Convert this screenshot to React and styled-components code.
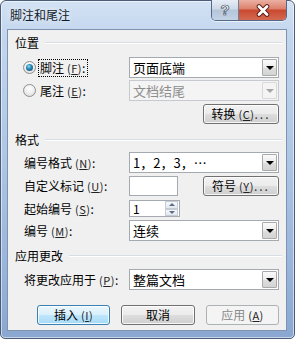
import React from "react";
import styled, { createGlobalStyle } from "styled-components";

const GlobalStyle = createGlobalStyle`
  html, body {
    margin: 0;
    padding: 0;
    background: #ffffff;
  }
  body {
    font-family: "Noto Sans CJK SC", "Liberation Sans", sans-serif;
    font-size: 12px;
    color: #000;
  }
`;

const Window = styled.div`
  box-sizing: border-box;
  width: 295px;
  height: 339px;
  display: flex;
  flex-direction: column;
  border: 1px solid #4a5c78;
  border-radius: 6px 6px 5px 5px;
  padding: 0 7px 7px 6px;
  background: linear-gradient(
    180deg,
    #d3e2f3 0%,
    #c2d6ee 10%,
    #aec7e5 45%,
    #98b4da 80%,
    #89a7d0 100%
  );
  box-shadow: inset 0 0 0 1px rgba(255, 255, 255, 0.55);
`;

const TitleBar = styled.div`
  height: 28px;
  display: flex;
  align-items: center;
  justify-content: space-between;
`;

const Title = styled.div`
  padding-left: 3px;
  font-size: 12px;
  line-height: 14px;
  color: #101a28;
  text-shadow: 0 0 6px rgba(255, 255, 255, 0.9);
`;

const CaptionButtons = styled.div`
  align-self: flex-start;
  margin-top: -1px;
  display: flex;
  height: 20px;
  border: 1px solid #55688a;
  border-top: none;
  border-radius: 0 0 5px 5px;
  overflow: hidden;
  box-shadow: 0 1px 0 rgba(255, 255, 255, 0.6);
`;

const HelpButton = styled.div`
  width: 26px;
  display: flex;
  align-items: center;
  justify-content: center;
  border-right: 1px solid #6d7e99;
  background: linear-gradient(180deg, #e6edf6 0%, #cdd9e8 45%, #b5c5da 50%, #c3d2e4 100%);
  color: #fff;
  font-family: "Liberation Sans", sans-serif;
  font-weight: bold;
  font-size: 15px;
  line-height: 16px;
  -webkit-text-stroke: 0.7px #3b4a60;
`;

const CloseButton = styled.div`
  width: 47px;
  display: flex;
  align-items: center;
  justify-content: center;
  background: linear-gradient(180deg, #eab1a4 0%, #dc7f6b 45%, #c9492f 50%, #d46a52 100%);
`;

const Client = styled.div`
  flex: 1;
  box-sizing: border-box;
  display: flex;
  flex-direction: column;
  border: 1px solid #7f93b1;
  background: #f0f0f0;
`;

const GroupHeader = styled.div`
  display: flex;
  align-items: center;
  height: 14px;
  margin-top: ${(p) => p.$top}px;
  padding: 0 4px 0 7px;
`;

const GroupTitle = styled.span`
  font-size: 12px;
  line-height: 14px;
  color: #000;
`;

const GroupLine = styled.div`
  flex: 1;
  height: 0;
  margin-left: 6px;
  border-top: 1px solid #d5dfe5;
  border-bottom: 1px solid #ffffff;
`;

const Row = styled.div`
  display: flex;
  align-items: center;
  height: ${(p) => p.$height || 21}px;
  margin-top: ${(p) => p.$top}px;
  padding: 0 7px 0 ${(p) => p.$indent || 16}px;
`;

const Label = styled.div`
  width: ${(p) => p.$width || 105}px;
  display: flex;
  align-items: center;
  font-size: 12px;
  line-height: 14px;
  white-space: nowrap;
`;

const Key = styled.span`
  margin-left: 3px;
  font-size: 11px;
  letter-spacing: 0.5px;
  color: #222;
`;

const Radio = styled.span`
  box-sizing: border-box;
  width: 13px;
  height: 13px;
  border-radius: 50%;
  border: 1px solid #8e8f8f;
  background: radial-gradient(circle at 50% 35%, #ffffff 0%, #f0f0f0 45%, #d6d6d6 100%);
  display: flex;
  align-items: center;
  justify-content: center;
  flex: none;

  &::after {
    content: "";
    display: ${(p) => (p.$checked ? "block" : "none")};
    width: 7px;
    height: 7px;
    border-radius: 50%;
    background: radial-gradient(circle at 40% 35%, #8fe0f5 0%, #2a88b5 40%, #0b3f63 100%);
  }
`;

const FocusText = styled.span`
  margin-left: 2px;
  padding: 1px 2px 1px 1px;
  border: 1px dotted ${(p) => (p.$focus ? "#000" : "transparent")};
  line-height: 14px;
`;

const Combo = styled.div`
  box-sizing: border-box;
  width: 150px;
  height: 21px;
  display: flex;
  align-items: center;
  padding: 1px;
  border: 1px solid ${(p) => (p.$disabled ? "#c6c9cd" : "#a5a9b0")};
  background: ${(p) => (p.$disabled ? "#f4f4f4" : "#ffffff")};
  color: ${(p) => (p.$disabled ? "#8d8d8d" : "#000")};
`;

const ComboText = styled.span`
  flex: 1;
  padding-left: 2px;
  font-size: 13px;
  line-height: 15px;
  white-space: nowrap;
`;

const ComboArrow = styled.span`
  box-sizing: border-box;
  width: 15px;
  height: 17px;
  display: flex;
  align-items: center;
  justify-content: center;
  border: 1px solid ${(p) => (p.$disabled ? "#d9d9d9" : "#a9a9a9")};
  border-radius: 1px;
  background: ${(p) =>
    p.$disabled
      ? "#f4f4f4"
      : "linear-gradient(180deg, #fafafa 0%, #ececec 50%, #dedede 51%, #d4d4d4 100%)"};

  &::after {
    content: "";
    border-left: 4px solid transparent;
    border-right: 4px solid transparent;
    border-top: 4px solid ${(p) => (p.$disabled ? "#a6a6a6" : "#000")};
    margin-top: 1px;
  }
`;

const TextBox = styled.div`
  box-sizing: border-box;
  width: ${(p) => p.$width}px;
  height: ${(p) => p.$height || 20}px;
  display: flex;
  align-items: center;
  border: 1px solid #a5a9b0;
  background: #ffffff;
`;

const TextValue = styled.span`
  flex: 1;
  padding-left: 3px;
  font-size: 12px;
  line-height: 14px;
`;

const SpinButtons = styled.div`
  width: 13px;
  height: 100%;
  display: flex;
  flex-direction: column;
  margin-right: 1px;
`;

const SpinPart = styled.span`
  flex: 1;
  box-sizing: border-box;
  display: flex;
  align-items: center;
  justify-content: center;
  border: 1px solid #c5ccd6;
  background: linear-gradient(180deg, #f6f8fb 0%, #e3e8ef 100%);

  &::after {
    content: "";
    border-left: 3px solid transparent;
    border-right: 3px solid transparent;
    ${(p) => (p.$up ? "border-bottom" : "border-top")}: 3px solid #5c6f88;
  }
`;

const Button = styled.div`
  box-sizing: border-box;
  width: ${(p) => p.$width || 73}px;
  height: 20px;
  margin-left: ${(p) => (p.$push ? "auto" : "0")};
  display: flex;
  align-items: center;
  justify-content: center;
  border-radius: 3px;
  font-size: 12px;
  line-height: 14px;
  white-space: nowrap;
  border: 1px solid ${(p) => (p.$variant === "default" ? "#3c7fb1" : p.$variant === "disabled" ? "#adb2b5" : "#707070")};
  color: ${(p) => (p.$variant === "disabled" ? "#8a8a8a" : "#000")};
  background: ${(p) =>
    p.$variant === "default"
      ? "linear-gradient(180deg, #eaf6fd 0%, #d9f0fc 50%, #bee6fd 51%, #a7d9f5 100%)"
      : p.$variant === "disabled"
      ? "#f4f4f4"
      : "linear-gradient(180deg, #f2f2f2 0%, #ebebeb 50%, #dddddd 51%, #cfcfcf 100%)"};
  box-shadow: inset 0 0 0 1px ${(p) => (p.$variant === "disabled" ? "#f4f4f4" : "rgba(255,255,255,0.8)")};
`;

const Dots = styled.span`
  letter-spacing: 2px;
  color: #333;
`;

const ButtonRow = styled.div`
  display: flex;
  justify-content: flex-end;
  gap: 11px;
  height: 20px;
  margin-top: ${(p) => p.$top}px;
  padding-right: 7px;
`;

const Mn = ({ k }) => (
  <Key>
    (<u>{k}</u>)
  </Key>
);

function CloseGlyph() {
  return (
    <svg width="16" height="13" viewBox="0 0 16 13">
      <path d="M4 2.5 L12 10.5 M12 2.5 L4 10.5" stroke="#5a1e14" strokeWidth="4.6" strokeLinecap="round" />
      <path d="M4 2.5 L12 10.5 M12 2.5 L4 10.5" stroke="#ffffff" strokeWidth="2.8" strokeLinecap="round" />
    </svg>
  );
}

export default function App() {
  return (
    <>
      <GlobalStyle />
      <Window>
        <TitleBar>
          <Title>脚注和尾注</Title>
          <CaptionButtons>
            <HelpButton>?</HelpButton>
            <CloseButton>
              <CloseGlyph />
            </CloseButton>
          </CaptionButtons>
        </TitleBar>
        <Client>
          <GroupHeader $top={6}>
            <GroupTitle>位置</GroupTitle>
            <GroupLine />
          </GroupHeader>
          <Row $top={7} $indent={15}>
            <Label $width={106}>
              <Radio $checked />
              <FocusText $focus>
                脚注<Mn k="F" />:
              </FocusText>
            </Label>
            <Combo>
              <ComboText>页面底端</ComboText>
              <ComboArrow />
            </Combo>
          </Row>
          <Row $top={2} $indent={15}>
            <Label $width={106}>
              <Radio />
              <FocusText>
                尾注<Mn k="E" />:
              </FocusText>
            </Label>
            <Combo $disabled>
              <ComboText>文档结尾</ComboText>
              <ComboArrow $disabled />
            </Combo>
          </Row>
          <Row $top={3} $height={20}>
            <Button $width={76} $push>
              转换<Mn k="C" />
              <Dots>...</Dots>
            </Button>
          </Row>

          <GroupHeader $top={9}>
            <GroupTitle>格式</GroupTitle>
            <GroupLine />
          </GroupHeader>
          <Row $top={5}>
            <Label>
              编号格式<Mn k="N" />:
            </Label>
            <Combo>
              <ComboText>1，2，3，…</ComboText>
              <ComboArrow />
            </Combo>
          </Row>
          <Row $top={3} $height={20}>
            <Label>
              自定义标记<Mn k="U" />:
            </Label>
            <TextBox $width={49} />
            <Button $width={76} $push>
              符号<Mn k="Y" />
              <Dots>...</Dots>
            </Button>
          </Row>
          <Row $top={4} $height={17}>
            <Label>
              起始编号<Mn k="S" />:
            </Label>
            <TextBox $width={51} $height={17}>
              <TextValue>1</TextValue>
              <SpinButtons>
                <SpinPart $up />
                <SpinPart />
              </SpinButtons>
            </TextBox>
          </Row>
          <Row $top={3}>
            <Label>
              编号<Mn k="M" />:
            </Label>
            <Combo>
              <ComboText>连续</ComboText>
              <ComboArrow />
            </Combo>
          </Row>

          <GroupHeader $top={8}>
            <GroupTitle>应用更改</GroupTitle>
            <GroupLine />
          </GroupHeader>
          <Row $top={6}>
            <Label>
              将更改应用于<Mn k="P" />:
            </Label>
            <Combo>
              <ComboText>整篇文档</ComboText>
              <ComboArrow />
            </Combo>
          </Row>

          <ButtonRow $top={15}>
            <Button $variant="default">
              插入<Mn k="I" />
            </Button>
            <Button $width={74}>取消</Button>
            <Button $variant="disabled">
              应用<Mn k="A" />
            </Button>
          </ButtonRow>
        </Client>
      </Window>
    </>
  );
}
